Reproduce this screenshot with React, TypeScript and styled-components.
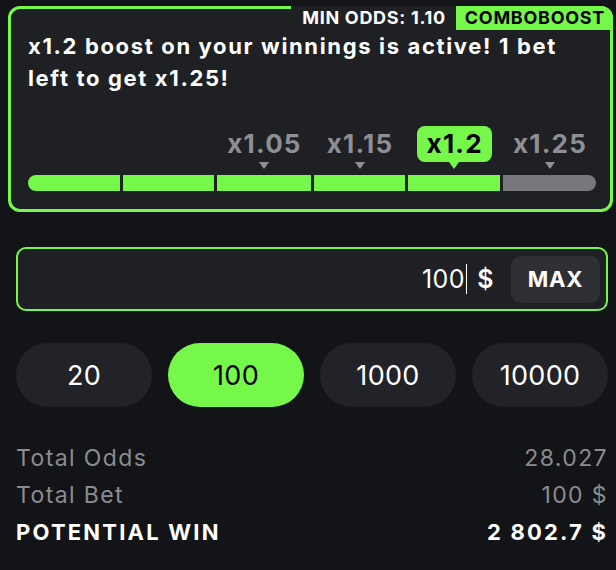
import React, { FunctionComponent } from 'react';
import styled, { createGlobalStyle } from 'styled-components';

const GREEN = '#76f84b';

const GlobalStyle = createGlobalStyle`
    html, body {
        margin: 0;
        padding: 0;
        background: #131418;
        font-family: Inter, 'Noto Sans', sans-serif;
        color: #ffffff;
    }
    * {
        box-sizing: border-box;
    }
`;

const StyledPage = styled.div`
    padding: 6px 3px 0 8px;
    width: 616px;
    height: 570px;
    overflow: hidden;
`;

const StyledCard = styled.div`
    position: relative;
    border: 3px solid ${GREEN};
    border-radius: 12px;
    background: #1e2024;
    padding: 21px 14px 18px 17px;
`;

const StyledBadge = styled.div`
    position: absolute;
    top: -3px;
    right: -3px;
    display: flex;
    height: 24px;
    font-size: 18px;
    font-weight: 700;
    letter-spacing: 0.7px;
    line-height: 24px;
    text-transform: uppercase;
`;

const StyledBadgePart = styled.div<{ $accent?: boolean }>`
    padding: ${({ $accent }) => ($accent ? '0 8px 0 9px' : '0 10px 0 11px')};
    background: ${({ $accent }) => ($accent ? GREEN : '#1e2024')};
    color: ${({ $accent }) => ($accent ? '#000' : '#fff')};
    border-radius: ${({ $accent }) => ($accent ? '0 12px 0 0' : '0 0 0 8px')};
`;

const StyledHeadline = styled.div`
    font-size: 22px;
    font-weight: 700;
    letter-spacing: 1.65px;
    line-height: 32px;
    padding-right: 14px;
`;

const StyledTrack = styled.div`
    margin-top: 32px;
    display: grid;
    grid-template-columns: repeat(6, 1fr);
    column-gap: 3px;
    row-gap: 6px;
`;

const StyledStep = styled.div<{ $col: number }>`
    grid-column: ${({ $col }) => $col};
    grid-row: 1;
    display: flex;
    flex-direction: column;
    align-items: center;
`;

const StyledTag = styled.div<{ $active?: boolean }>`
    height: 36px;
    padding: 0 9px 0 10px;
    border-radius: 8px;
    font-size: 26px;
    font-weight: 700;
    letter-spacing: 1.2px;
    line-height: 36px;
    background: ${({ $active }) => ($active ? GREEN : 'transparent')};
    color: ${({ $active }) => ($active ? '#000' : '#8e8e93')};
`;

const StyledArrow = styled.div<{ $active?: boolean }>`
    width: 0;
    height: 0;
    border-left: 5px solid transparent;
    border-right: 5px solid transparent;
    border-top: 7px solid ${({ $active }) => ($active ? GREEN : '#8e8e93')};
`;

const StyledSegment = styled.div<{ $filled?: boolean; $first?: boolean; $last?: boolean }>`
    grid-row: 2;
    height: 16px;
    background: ${({ $filled }) => ($filled ? GREEN : '#76777c')};
    border-radius: ${({ $first, $last }) => ($first ? '8px 0 0 8px' : $last ? '0 8px 8px 0' : '0')};
`;

const StyledBody = styled.div`
    padding: 0 5px 0 8px;
`;

const StyledStake = styled.div`
    margin-top: 35px;
    height: 64px;
    border: 2px solid ${GREEN};
    border-radius: 10px;
    background: #1e2024;
    display: flex;
    align-items: center;
    justify-content: flex-end;
    padding: 0 6px 0 16px;
`;

const StyledStakeValue = styled.div`
    display: flex;
    align-items: center;
    font-size: 25px;
    letter-spacing: 0.4px;
    line-height: 30px;
    margin-right: 17px;
`;

const StyledCaret = styled.span`
    display: inline-block;
    width: 1.5px;
    height: 30px;
    background: #ffffff;
    margin: 0 10px 0 1px;
`;

const StyledCurrency = styled.span`
    font-weight: 600;
`;

const StyledMax = styled.button`
    width: 89px;
    height: 47px;
    border: none;
    border-radius: 10px;
    background: #2f3035;
    color: #ffffff;
    font-family: inherit;
    font-size: 22px;
    font-weight: 700;
    letter-spacing: 0.8px;
`;

const StyledChips = styled.div`
    margin-top: 32px;
    display: grid;
    grid-template-columns: repeat(4, 1fr);
    gap: 16px;
`;

const StyledChip = styled.button<{ $active?: boolean }>`
    height: 64px;
    border: none;
    border-radius: 32px;
    background: ${({ $active }) => ($active ? GREEN : '#212328')};
    color: ${({ $active }) => ($active ? '#000' : '#fff')};
    font-family: inherit;
    font-size: 27px;
    font-weight: 400;
    letter-spacing: 0.3px;
`;

const StyledSummary = styled.div`
    margin-top: 33px;
    display: flex;
    flex-direction: column;
`;

const StyledRow = styled.div<{ $strong?: boolean }>`
    display: flex;
    justify-content: space-between;
    height: 37px;
    line-height: 37px;
    font-size: ${({ $strong }) => ($strong ? '22px' : '23px')};
    font-weight: ${({ $strong }) => ($strong ? 700 : 400)};
    letter-spacing: ${({ $strong }) => ($strong ? '2.2px' : '1.4px')};
    color: ${({ $strong }) => ($strong ? '#ffffff' : '#8b8c90')};
`;

const steps = [
    { col: 3, label: 'x1.05' },
    { col: 4, label: 'x1.15' },
    { col: 5, label: 'x1.2', active: true },
    { col: 6, label: 'x1.25' },
];

const chips = [
    { value: '20' },
    { value: '100', active: true },
    { value: '1000' },
    { value: '10000' },
];

const App: FunctionComponent = () => {
    return (
        <>
            <GlobalStyle />
            <StyledPage>
                <StyledCard>
                    <StyledBadge>
                        <StyledBadgePart>Min odds: 1.10</StyledBadgePart>
                        <StyledBadgePart $accent>Comboboost</StyledBadgePart>
                    </StyledBadge>
                    <StyledHeadline>x1.2 boost on your winnings is active! 1 bet left to get x1.25!</StyledHeadline>
                    <StyledTrack>
                        {steps.map((step) => (
                            <StyledStep key={step.label} $col={step.col}>
                                <StyledTag $active={step.active}>{step.label}</StyledTag>
                                <StyledArrow $active={step.active} />
                            </StyledStep>
                        ))}
                        {[0, 1, 2, 3, 4, 5].map((i) => (
                            <StyledSegment key={i} $filled={i < 5} $first={i === 0} $last={i === 5} />
                        ))}
                    </StyledTrack>
                </StyledCard>
                <StyledBody>
                    <StyledStake>
                        <StyledStakeValue>
                            100
                            <StyledCaret />
                            <StyledCurrency>$</StyledCurrency>
                        </StyledStakeValue>
                        <StyledMax>MAX</StyledMax>
                    </StyledStake>
                    <StyledChips>
                        {chips.map((chip) => (
                            <StyledChip key={chip.value} $active={chip.active}>
                                {chip.value}
                            </StyledChip>
                        ))}
                    </StyledChips>
                    <StyledSummary>
                        <StyledRow>
                            <span>Total Odds</span>
                            <span>28.027</span>
                        </StyledRow>
                        <StyledRow>
                            <span>Total Bet</span>
                            <span>100 $</span>
                        </StyledRow>
                        <StyledRow $strong>
                            <span>POTENTIAL WIN</span>
                            <span>2 802.7 $</span>
                        </StyledRow>
                    </StyledSummary>
                </StyledBody>
            </StyledPage>
        </>
    );
};

export default App;
